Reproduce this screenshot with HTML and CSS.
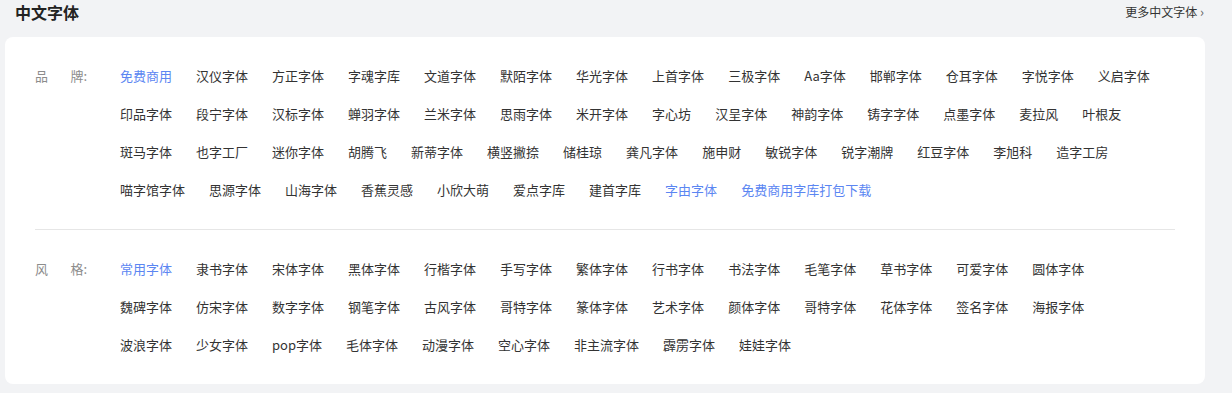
FILE: index.html
```html
<!DOCTYPE html>
<html>

<head>
	<meta charset="UTF-8">
	<link rel="stylesheet" href="styles.css">
</head>

<body>
	<div class="page">
		<!-- 标题栏 -->
		<div class="head-row">
			<div class="head-title">中文字体</div>
			<a class="head-more">更多中文字体 <span class="arrow">&#8250;</span></a>
		</div>

		<div class="font-card">
			<!-- 品牌 -->
			<div class="font-section">
				<div class="section-label"><span>品</span><span>牌:</span></div>
				<div class="section-list">
					<div class="list-row">
						<a class="blue">免费商用</a><a>汉仪字体</a><a>方正字体</a><a>字魂字库</a><a>文道字体</a><a>默陌字体</a><a>华光字体</a><a>上首字体</a><a>三极字体</a><a>Aa字体</a><a>邯郸字体</a><a>仓耳字体</a><a>字悦字体</a><a>义启字体</a>
					</div>
					<div class="list-row">
						<a>印品字体</a><a>段宁字体</a><a>汉标字体</a><a>蝉羽字体</a><a>兰米字体</a><a>思雨字体</a><a>米开字体</a><a>字心坊</a><a>汉呈字体</a><a>神韵字体</a><a>铸字字体</a><a>点墨字体</a><a>麦拉风</a><a>叶根友</a>
					</div>
					<div class="list-row">
						<a>斑马字体</a><a>也字工厂</a><a>迷你字体</a><a>胡腾飞</a><a>新蒂字体</a><a>横竖撇捺</a><a>储桂琼</a><a>龚凡字体</a><a>施申财</a><a>敏锐字体</a><a>锐字潮牌</a><a>红豆字体</a><a>李旭科</a><a>造字工房</a>
					</div>
					<div class="list-row">
						<a>喵字馆字体</a><a>思源字体</a><a>山海字体</a><a>香蕉灵感</a><a>小欣大萌</a><a>爱点字库</a><a>建首字库</a><a class="blue">字由字体</a><a class="blue">免费商用字库打包下载</a>
					</div>
				</div>
			</div>

			<!-- 风格 -->
			<div class="font-section">
				<div class="section-label"><span>风</span><span>格:</span></div>
				<div class="section-list">
					<div class="list-row">
						<a class="blue">常用字体</a><a>隶书字体</a><a>宋体字体</a><a>黑体字体</a><a>行楷字体</a><a>手写字体</a><a>繁体字体</a><a>行书字体</a><a>书法字体</a><a>毛笔字体</a><a>草书字体</a><a>可爱字体</a><a>圆体字体</a>
					</div>
					<div class="list-row">
						<a>魏碑字体</a><a>仿宋字体</a><a>数字字体</a><a>钢笔字体</a><a>古风字体</a><a>哥特字体</a><a>篆体字体</a><a>艺术字体</a><a>颜体字体</a><a>哥特字体</a><a>花体字体</a><a>签名字体</a><a>海报字体</a>
					</div>
					<div class="list-row">
						<a>波浪字体</a><a>少女字体</a><a>pop字体</a><a>毛体字体</a><a>动漫字体</a><a>空心字体</a><a>非主流字体</a><a>霹雳字体</a><a>娃娃字体</a>
					</div>
				</div>
			</div>
		</div>
	</div>
</body>

</html>
```

FILE: styles.css
```css
		html,
		body {
			margin: 0;
			padding: 0;
			background: #f2f3f5;
			font-family: "Noto Sans CJK SC", "Noto Sans", sans-serif;
			color: #333333;
		}

		.page {
			width: 1200px;
			margin-left: 5px;
		}

		/* 标题栏 */
		.head-row {
			display: flex;
			justify-content: space-between;
			align-items: center;
			height: 24px;
			margin-bottom: 13px;
			padding-left: 10px;
		}

		.head-title {
			font-size: 16px;
			font-weight: 700;
			color: #222222;
			line-height: 24px;
		}

		.head-more {
			font-size: 12px;
			color: #333333;
			line-height: 24px;
			padding-right: 1px;
			cursor: pointer;
		}

		.head-more .arrow {
			font-size: 13px;
			color: #666666;
		}

		/* 卡片 */
		.font-card {
			background: #ffffff;
			border-radius: 8px;
			padding: 0 30px;
		}

		.font-section {
			display: flex;
			padding: 20px 0;
			border-bottom: 1px solid #e6e6e6;
		}

		.font-section:last-child {
			border-bottom: none;
		}

		.section-label {
			display: flex;
			justify-content: space-between;
			width: 52px;
			margin-right: 33px;
			height: 38px;
			line-height: 38px;
			font-size: 13px;
			color: #8c8c8c;
		}

		.section-list {
			flex: 1;
		}

		.list-row {
			display: flex;
			gap: 24px;
			height: 38px;
			line-height: 38px;
			font-size: 13px;
		}

		.list-row a {
			color: #333333;
			white-space: nowrap;
			cursor: pointer;
		}

		.list-row a.blue {
			color: #5b86f2;
		}
```
